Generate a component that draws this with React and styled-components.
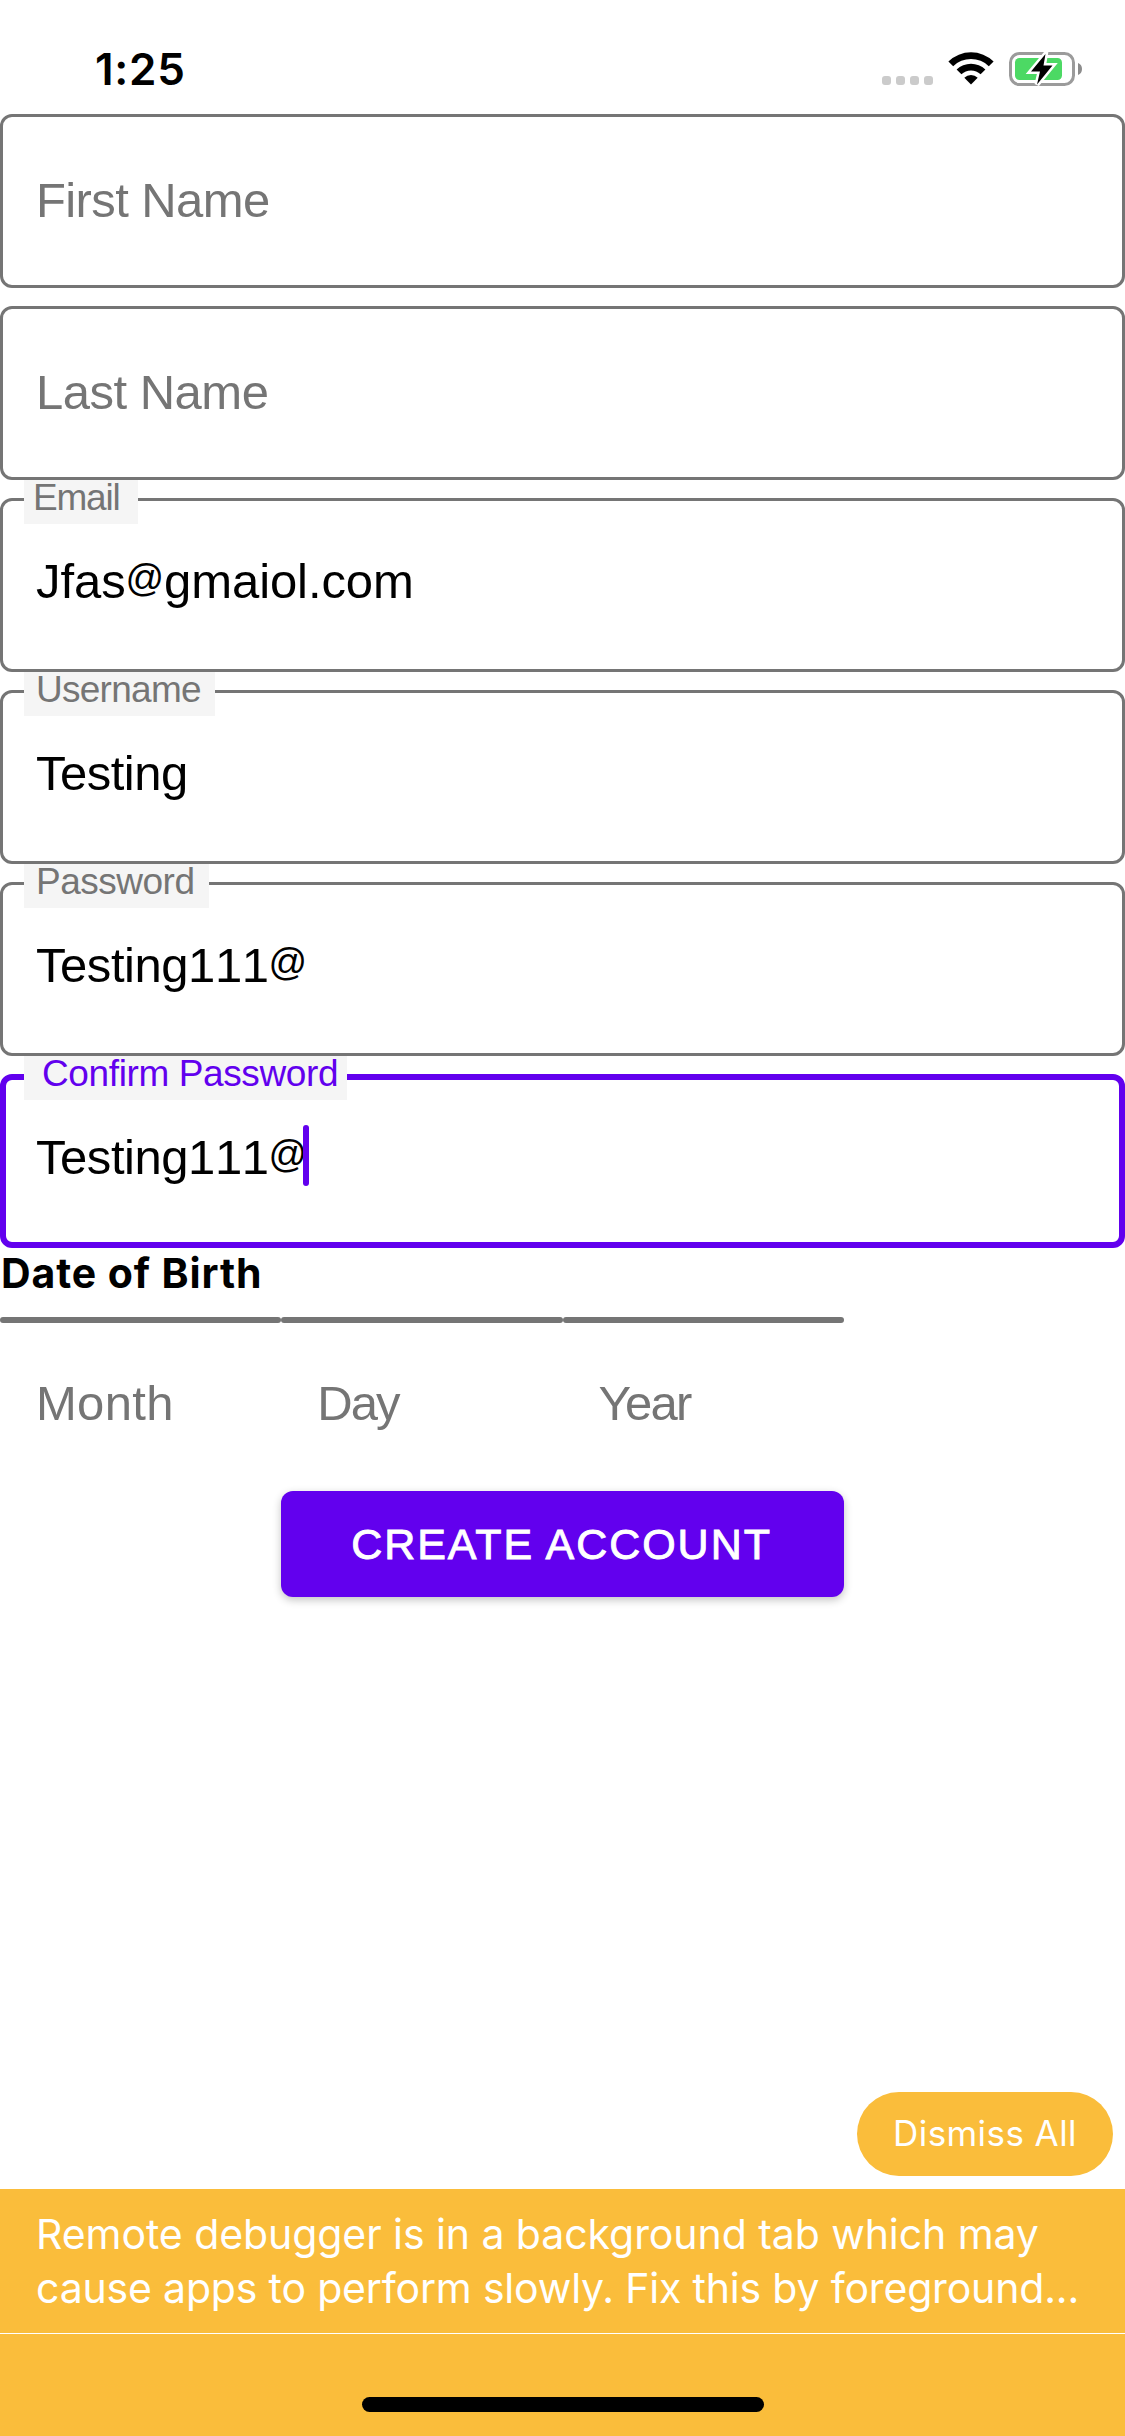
import React from "react";
import styled, { createGlobalStyle } from "styled-components";

const GREY = "#757575";
const PURPLE = "#6200ee";
const AMBER = "#fabd3b";

const GlobalStyle = createGlobalStyle`
  * { box-sizing: border-box; }
  body { margin: 0; background: #ffffff; }
`;

const Screen = styled.div`
  display: flex;
  flex-direction: column;
  width: 1125px;
  height: 2436px;
  overflow: hidden;
  background: #ffffff;
  font-family: "Liberation Sans", Arial, sans-serif;
`;

const StatusBar = styled.header`
  display: flex;
  justify-content: space-between;
  height: 114px;
  padding: 42px 42px 0 95px;
`;

const Clock = styled.span`
  font: 600 44px/55px Inter, sans-serif;
  letter-spacing: 0.7px;
  color: #000000;
`;

const StatusIcons = styled.div`
  display: flex;
  align-items: flex-start;
  padding-top: 9px;
`;

const SignalDots = styled.div`
  display: flex;
  gap: 5px;
  margin: 25px 15px 0 0;
`;

const SignalDot = styled.i`
  width: 9px;
  height: 9px;
  border-radius: 3px;
  background: #cbcbcb;
`;

const WifiGlyph = styled.svg`
  width: 46px;
  height: 35px;
  margin-right: 15px;
`;

const BatteryGlyph = styled.svg`
  width: 74px;
  height: 38px;
`;

const Form = styled.form`
  display: flex;
  flex-direction: column;
`;

const FieldStack = styled.div`
  display: flex;
  flex-direction: column;
  gap: 18px;
`;

const FieldBox = styled.div`
  position: relative;
  height: 174px;
  padding: ${({ $focused, $filled }) =>
    `${($filled ? 53 : 56) - ($focused ? 6 : 3)}px 0 0 ${$focused ? 30 : 33}px`};
  border: ${({ $focused }) => ($focused ? `6px solid ${PURPLE}` : `3px solid ${GREY}`)};
  border-radius: 12px;
`;

const FieldLabel = styled.label`
  position: absolute;
  top: ${({ $focused }) => ($focused ? -24 : -21)}px;
  left: ${({ $focused }) => ($focused ? 18 : 21)}px;
  width: ${({ $width }) => $width}px;
  height: 44px;
  padding-left: ${({ $indent }) => $indent}px;
  background: #f5f5f5;
  color: ${({ $focused }) => ($focused ? PURPLE : GREY)};
  font-size: 37px;
  line-height: 36px;
  letter-spacing: ${({ $tracking }) => $tracking}px;
  white-space: nowrap;
`;

const FieldText = styled.span`
  display: block;
  width: max-content;
  position: relative;
  color: ${({ $filled }) => ($filled ? "#000000" : GREY)};
  font-size: 49px;
  line-height: 60px;
  letter-spacing: ${({ $tracking }) => $tracking}px;
  white-space: nowrap;
`;

const AtSign = styled.span`
  font-size: 38px;
  line-height: 0;
  vertical-align: 7px;
`;

const Digits = styled.span`
  font-kerning: none;
`;

const Caret = styled.i`
  position: absolute;
  top: -2px;
  left: 267px;
  width: 6px;
  height: 61px;
  border-radius: 3px;
  background: ${PURPLE};
`;

const SectionTitle = styled.h2`
  margin: 0 0 19px;
  padding-left: 1px;
  font: 700 41px/50px Inter, sans-serif;
  letter-spacing: 0.9px;
  color: #000000;
`;

const DateRow = styled.div`
  display: grid;
  grid-template-columns: repeat(3, 281.25px);
`;

const DatePart = styled.div`
  display: flex;
  flex-direction: column;
  height: 174px;
`;

const DateBar = styled.i`
  height: 6px;
  margin-bottom: 50px;
  border-radius: 3px;
  background: ${GREY};
`;

const DateText = styled(FieldText)`
  margin-left: 36px;
`;

const SubmitButton = styled.button`
  align-self: center;
  width: 563px;
  height: 106px;
  padding: 0 2px 1px 0;
  border: 0;
  border-radius: 12px;
  background: ${PURPLE};
  box-shadow: 0 3px 9px rgba(0, 0, 0, 0.24);
  color: #ffffff;
  font: 400 43px/50px "Liberation Sans", Arial, sans-serif;
  letter-spacing: 1.95px;
  -webkit-text-stroke: 0.9px #ffffff;
`;

const Warnings = styled.footer`
  display: flex;
  flex-direction: column;
  margin-top: auto;
  font-family: Inter, sans-serif;
  color: #ffffff;
`;

const DismissButton = styled.button`
  align-self: flex-end;
  width: 256px;
  height: 84px;
  margin: 0 12px 13px 0;
  padding: 0 0 2px;
  border: 0;
  border-radius: 42px;
  background: ${AMBER};
  color: #ffffff;
  font: 400 35px/42px Inter, sans-serif;
  letter-spacing: 0.42px;
`;

const WarningRow = styled.div`
  display: flex;
  flex-direction: column;
  height: 144px;
  padding: 18px 0 0 36px;
  background: ${AMBER};
`;

const WarningLine = styled.span`
  font-size: 41px;
  line-height: 54px;
  letter-spacing: ${({ $tracking }) => $tracking}px;
  white-space: nowrap;
`;

const HomeArea = styled.div`
  display: flex;
  justify-content: center;
  height: 102px;
  margin-top: 1px;
  padding-top: 63px;
  background: ${AMBER};
`;

const HomeIndicator = styled.i`
  width: 402px;
  height: 15px;
  border-radius: 8px;
  background: #000000;
`;

const fields = [
  { placeholder: "First Name", tracking: -0.6 },
  { placeholder: "Last Name", tracking: -0.5 },
  { label: "Email", width: 114, indent: 9, labelTracking: -1.2, value: "Jfas@gmaiol.com", tracking: -0.08 },
  { label: "Username", width: 191, indent: 12, labelTracking: -0.73, value: "Testing", tracking: -0.5 },
  { label: "Password", width: 185, indent: 12, labelTracking: -0.5, value: "Testing111@", tracking: -0.45 },
  {
    label: "Confirm Password",
    width: 323,
    indent: 18,
    labelTracking: -0.38,
    value: "Testing111@",
    tracking: -0.45,
    focused: true,
  },
];

const dateParts = [
  { text: "Month", tracking: 0.3 },
  { text: "Day", tracking: -2 },
  { text: "Year", tracking: -1.7 },
];

function renderValue(value) {
  return value.split(/(@|\d+)/).map((part, index) => {
    if (part === "@") return <AtSign key={index}>{part}</AtSign>;
    if (/^\d+$/.test(part)) return <Digits key={index}>{part}</Digits>;
    return part;
  });
}

function Field({ placeholder, label, width, indent, labelTracking, value, tracking, focused }) {
  const filled = Boolean(value);
  return (
    <FieldBox $focused={focused} $filled={filled}>
      {label && (
        <FieldLabel $focused={focused} $width={width} $indent={indent} $tracking={labelTracking}>
          {label}
        </FieldLabel>
      )}
      <FieldText $filled={filled} $tracking={tracking}>
        {filled ? renderValue(value) : placeholder}
        {focused && <Caret />}
      </FieldText>
    </FieldBox>
  );
}

function Wifi() {
  return (
    <WifiGlyph viewBox="0 0 46 35">
      <path d="M0.4 10.4 A32.5 32.5 0 0 1 45.6 10.4 L40.8 15.2 A25.6 25.6 0 0 0 5.2 15.2 Z" />
      <path d="M8.6 18.5 A20.6 20.6 0 0 1 37.4 18.5 L32.6 23.3 A13.8 13.8 0 0 0 13.4 23.3 Z" />
      <path d="M16.3 26.7 A9.5 9.5 0 0 1 29.7 26.7 L23 33.6 Z" />
    </WifiGlyph>
  );
}

function Battery() {
  return (
    <BatteryGlyph viewBox="0 0 74 38">
      <rect x="1.5" y="2.5" width="63" height="31" rx="9" fill="none" stroke="#9b9b9b" strokeWidth="3" />
      <path d="M69 12 Q73 13.5 73 18 Q73 22.5 69 24 Z" fill="#8c8c8c" />
      <rect x="6" y="7" width="47" height="22" rx="4.5" fill="#4cd964" />
      <path
        d="M36.5 3 L22 20.5 H31 L28 33.5 L43.5 14.5 H34.5 Z"
        fill="#000000"
        stroke="#ffffff"
        strokeWidth="5"
        paintOrder="stroke"
      />
    </BatteryGlyph>
  );
}

export default function App() {
  return (
    <>
      <GlobalStyle />
      <Screen>
        <StatusBar>
          <Clock>1:25</Clock>
          <StatusIcons>
            <SignalDots>
              <SignalDot />
              <SignalDot />
              <SignalDot />
              <SignalDot />
            </SignalDots>
            <Wifi />
            <Battery />
          </StatusIcons>
        </StatusBar>
        <Form>
          <FieldStack>
            {fields.map((field) => (
              <Field key={field.label || field.placeholder} {...field} />
            ))}
          </FieldStack>
          <SectionTitle>Date of Birth</SectionTitle>
          <DateRow>
            {dateParts.map(({ text, tracking }) => (
              <DatePart key={text}>
                <DateBar />
                <DateText $tracking={tracking}>{text}</DateText>
              </DatePart>
            ))}
          </DateRow>
          <SubmitButton type="button">CREATE ACCOUNT</SubmitButton>
        </Form>
        <Warnings>
          <DismissButton type="button">Dismiss All</DismissButton>
          <WarningRow>
            <WarningLine $tracking={-0.07}>Remote debugger is in a background tab which may</WarningLine>
            <WarningLine $tracking={-0.18}>cause apps to perform slowly. Fix this by foreground...</WarningLine>
          </WarningRow>
          <HomeArea>
            <HomeIndicator />
          </HomeArea>
        </Warnings>
      </Screen>
    </>
  );
}
